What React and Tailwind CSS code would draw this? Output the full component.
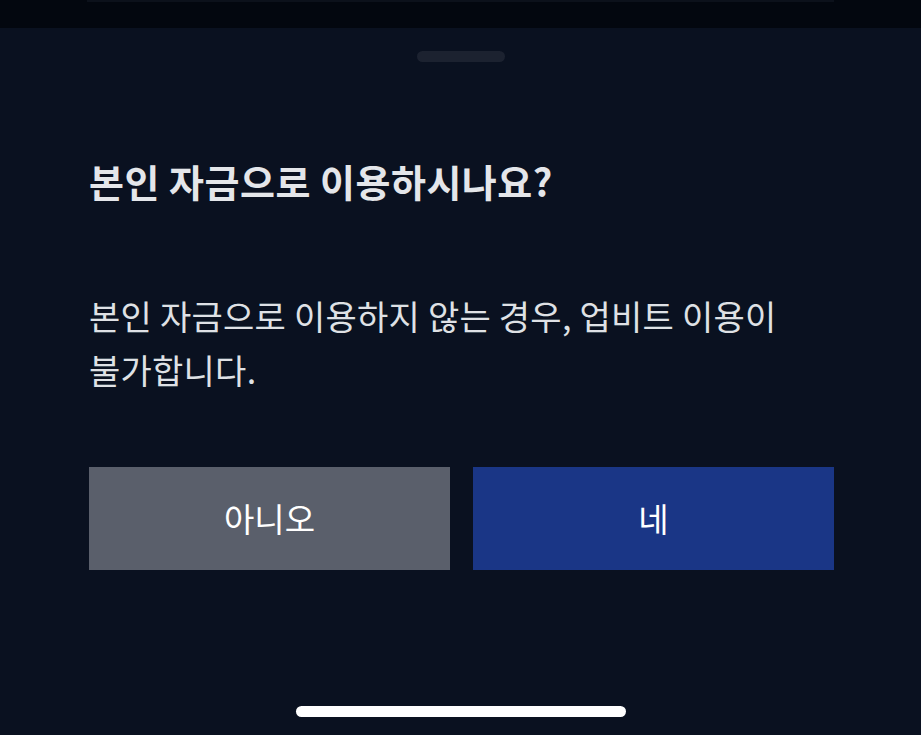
import React from "react";

const font = { fontFamily: '"Noto Sans CJK KR", "Noto Sans", sans-serif' };

export default function App() {
  return (
    <div className="w-[921px] h-[735px] bg-[#0a1120] flex flex-col overflow-hidden" style={font}>
      {/* dimmed page behind the sheet */}
      <div className="h-[28px] bg-[#03070f] flex justify-center">
        <div className="w-[747px] h-[2px] bg-[#0c111b]" />
      </div>

      {/* grab handle */}
      <div className="flex justify-center pt-[23px]">
        <div className="w-[88px] h-[11px] rounded-full bg-[#1c2230]" />
      </div>

      <div className="flex flex-col pl-[89px] pr-[87px]">
        <h1 className="mt-[97px] text-[38px] leading-[44px] font-bold text-[#e4e6ea] tracking-[0.5px]">
          본인 자금으로 이용하시나요?
        </h1>
        <p className="mt-[86px] text-[34px] leading-[54px] text-[#dfe1e5] tracking-[0.25px]">
          본인 자금으로 이용하지 않는 경우, 업비트 이용이
          <br />
          불가합니다.
        </p>

        <div className="mt-[70px] flex gap-[23px]">
          <button className="flex-1 h-[103px] bg-[#5a5f6b] text-white text-[33px] flex items-center justify-center">
            아니오
          </button>
          <button className="flex-1 h-[103px] bg-[#1a3686] text-white text-[33px] flex items-center justify-center">
            네
          </button>
        </div>
      </div>

      <div className="flex-1" />
      {/* home indicator */}
      <div className="flex justify-center pb-[18px]">
        <div className="w-[330px] h-[11px] rounded-full bg-white" />
      </div>
    </div>
  );
}
